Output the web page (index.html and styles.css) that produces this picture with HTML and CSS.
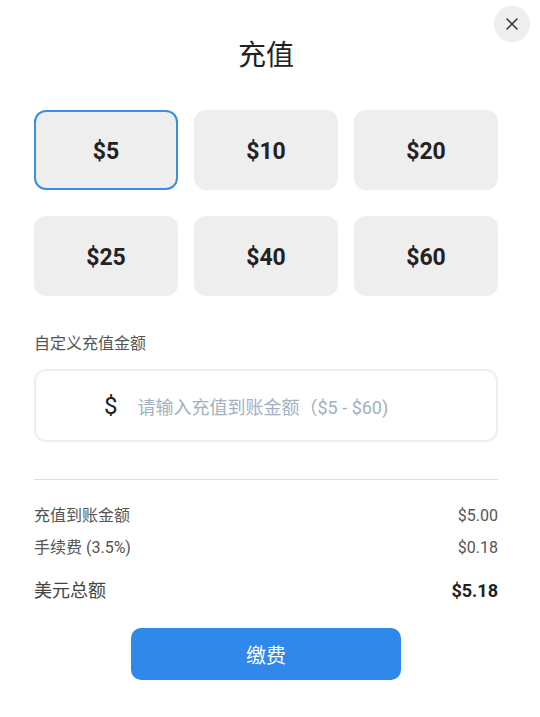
FILE: index.html
```html
<!DOCTYPE html>
<html lang="zh">
<head>
<meta charset="utf-8">
<link rel="stylesheet" href="styles.css">
</head>
<body>
<div class="dialog">
  <button class="close" aria-label="关闭">
    <svg width="14" height="14" viewBox="0 0 14 14"><path d="M2 2 L12 12 M12 2 L2 12" stroke="#333" stroke-width="1.5" stroke-linecap="round" fill="none"/></svg>
  </button>
  <h1 class="title">充值</h1>
  <div class="amounts">
    <div class="amount selected">$5</div>
    <div class="amount">$10</div>
    <div class="amount">$20</div>
    <div class="amount">$25</div>
    <div class="amount">$40</div>
    <div class="amount">$60</div>
  </div>
  <div class="label">自定义充值金额</div>
  <div class="input">
    <span class="dollar">$</span>
    <span class="placeholder">请输入充值到账金额（$5 - $60)</span>
  </div>
  <div class="divider"></div>
  <div class="row first"><span>充值到账金额</span><span>$5.00</span></div>
  <div class="row"><span>手续费 (3.5%)</span><span>$0.18</span></div>
  <div class="row total"><span>美元总额</span><span class="strong">$5.18</span></div>
  <div class="actions"><button class="pay">缴费</button></div>
</div>
</body>
</html>
```
FILE: styles.css
```css
html, body {
  margin: 0;
  padding: 0;
  background: #fff;
}
body {
  font-family: Roboto, "Noto Sans CJK SC", sans-serif;
  color: #222;
}
.dialog {
  position: relative;
  width: 464px;
  padding: 36px 42px 0 34px;
}
.close {
  position: absolute;
  top: 6px;
  right: 10px;
  width: 36px;
  height: 36px;
  border-radius: 50%;
  border: none;
  background: #eeeeee;
  display: flex;
  align-items: center;
  justify-content: center;
  padding: 0;
}
.title {
  margin: 0;
  height: 40px;
  line-height: 40px;
  text-align: center;
  font-size: 28px;
  font-weight: 400;
  color: #222;
}
.amounts {
  margin-top: 34px;
  display: grid;
  grid-template-columns: repeat(3, 144px);
  column-gap: 16px;
  row-gap: 26px;
}
.amount {
  height: 80px;
  box-sizing: border-box;
  border-radius: 12px;
  background: #eeeeee;
  display: flex;
  align-items: center;
  justify-content: center;
  font-size: 23px;
  font-weight: 700;
  color: #222;
  padding-top: 2px;
}
.amount.selected {
  border: 2px solid #3a8ee8;
}
.label {
  margin-top: 37px;
  font-size: 16px;
  line-height: 22px;
  color: #555;
}
.input {
  margin-top: 14px;
  height: 73px;
  box-sizing: border-box;
  border: 2px solid #eeeeee;
  border-radius: 12px;
  display: flex;
  align-items: center;
  padding-left: 68px;
  gap: 20px;
}
.dollar {
  font-size: 24px;
  color: #222;
}
.placeholder {
  font-size: 18px;
  color: #a3b0bf;
}
.divider {
  margin-top: 37px;
  height: 1px;
  background: #dddddd;
}
.row {
  display: flex;
  justify-content: space-between;
  font-size: 16px;
  line-height: 22px;
  color: #555;
  margin-top: 10px;
}
.row.first {
  margin-top: 25px;
}
.row.total {
  margin-top: 20px;
  font-size: 18px;
  line-height: 24px;
  color: #444;
}
.strong {
  font-weight: 700;
  color: #222;
}
.actions {
  margin-top: 25px;
  display: flex;
  justify-content: center;
}
.pay {
  width: 270px;
  height: 52px;
  border: none;
  border-radius: 10px;
  background: #3088ea;
  color: #fff;
  font-family: Roboto, "Noto Sans CJK SC", sans-serif;
  font-size: 20px;
}
```
